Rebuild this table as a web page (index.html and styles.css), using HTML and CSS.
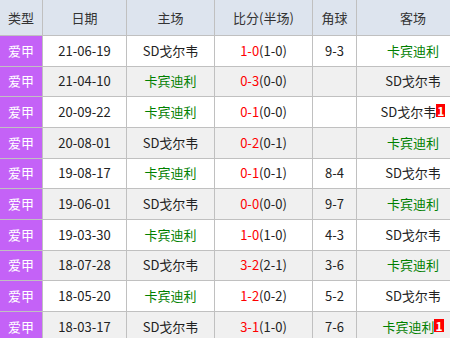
FILE: index.html
```html
<!DOCTYPE html>
<html>
<head>
<meta charset="utf-8">
<link rel="stylesheet" href="styles.css">
</head>
<body>
<table class="tbl">
  <colgroup>
    <col class="c1"><col class="c2"><col class="c3"><col class="c4"><col class="c5"><col class="c6">
  </colgroup>
  <thead>
    <tr><th>类型</th><th>日期</th><th>主场</th><th>比分(半场)</th><th>角球</th><th>客场</th></tr>
  </thead>
  <tbody>
    <tr><td class="lg">爱甲</td><td>21-06-19</td><td>SD戈尔韦</td><td><span class="sc">1-0</span>(1-0)</td><td>9-3</td><td class="g">卡宾迪利</td></tr>
    <tr><td class="lg">爱甲</td><td>21-04-10</td><td class="g">卡宾迪利</td><td><span class="sc">0-3</span>(0-0)</td><td></td><td>SD戈尔韦</td></tr>
    <tr><td class="lg">爱甲</td><td>20-09-22</td><td class="g">卡宾迪利</td><td><span class="sc">0-1</span>(0-0)</td><td></td><td>SD戈尔韦<span class="badge">1</span></td></tr>
    <tr><td class="lg">爱甲</td><td>20-08-01</td><td>SD戈尔韦</td><td><span class="sc">0-2</span>(0-1)</td><td></td><td class="g">卡宾迪利</td></tr>
    <tr><td class="lg">爱甲</td><td>19-08-17</td><td class="g">卡宾迪利</td><td><span class="sc">0-1</span>(0-1)</td><td>8-4</td><td>SD戈尔韦</td></tr>
    <tr><td class="lg">爱甲</td><td>19-06-01</td><td>SD戈尔韦</td><td><span class="sc">0-0</span>(0-0)</td><td>9-7</td><td class="g">卡宾迪利</td></tr>
    <tr><td class="lg">爱甲</td><td>19-03-30</td><td class="g">卡宾迪利</td><td><span class="sc">1-0</span>(1-0)</td><td>4-3</td><td>SD戈尔韦</td></tr>
    <tr><td class="lg">爱甲</td><td>18-07-28</td><td>SD戈尔韦</td><td><span class="sc">3-2</span>(2-1)</td><td>3-6</td><td class="g">卡宾迪利</td></tr>
    <tr><td class="lg">爱甲</td><td>18-05-20</td><td class="g">卡宾迪利</td><td><span class="sc">1-2</span>(0-2)</td><td>5-2</td><td>SD戈尔韦</td></tr>
    <tr><td class="lg">爱甲</td><td>18-03-17</td><td>SD戈尔韦</td><td><span class="sc">3-1</span>(1-0)</td><td>7-6</td><td class="g">卡宾迪利<span class="badge">1</span></td></tr>
  </tbody>
</table>
</body>
</html>
```

FILE: styles.css
```css
html, body {
  margin: 0;
  padding: 0;
  overflow: hidden;
  background: #fff;
}
body {
  font-family: "Noto Sans CJK SC", "Noto Sans", sans-serif;
  font-size: 13px;
  color: #333;
}
.tbl {
  border-collapse: collapse;
  table-layout: fixed;
  width: 470px;
  margin: -1px 0 0 -1px;
}
.c1 { width: 43px; }
.c2 { width: 84px; }
.c3 { width: 88px; }
.c4 { width: 98px; }
.c5 { width: 44px; }
.c6 { width: 113px; }
.tbl th, .tbl td {
  border: 1px solid #c0c0c0;
  text-align: center;
  vertical-align: middle;
  padding: 0;
  white-space: nowrap;
  line-height: 16px;
}
.tbl th {
  background: #dde4ee;
  font-weight: normal;
  color: #333;
  height: 35px;
  font-size: 13px;
}
.tbl td {
  height: 29.67px;
  color: #222;
}
.tbl tbody tr:nth-child(odd) td { background: #fff; }
.tbl tbody tr:nth-child(even) td { background: #f0f0f0; }
.tbl tbody tr td.lg {
  background: #c462f7;
  color: #fff;
}
.tbl td.g { color: #008000; }
.sc { color: #ff0000; }
.badge {
  display: inline-block;
  background: #ff0000;
  color: #fff;
  font-weight: bold;
  font-size: 12px;
  line-height: 13px;
  padding: 0 1px;
  vertical-align: 1px;
}
```
